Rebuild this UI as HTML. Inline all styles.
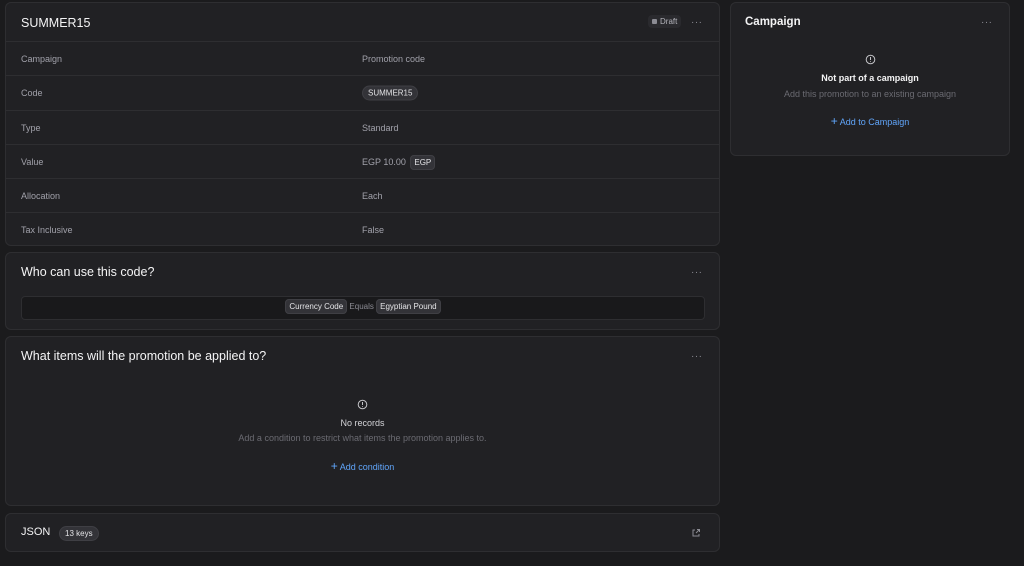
<!DOCTYPE html><html><head><style>
*{box-sizing:border-box;margin:0;padding:0}
body{width:1024px;height:566px;background:#1b1b1d;font-family:"Liberation Sans",sans-serif;color:#ededed;position:relative;overflow:hidden}
.card{position:absolute;background:#212124;border:1px solid #2e2e31;border-radius:6px}
.h{font-size:12.5px;font-weight:500;color:#f4f4f5}
.row{position:absolute;left:0;right:0;border-top:1px solid #2e2e31;font-size:9px;color:#a1a1aa}
.row span{position:absolute;top:50%;transform:translateY(-50%)}
.dots{position:absolute;color:#8b8b93;font-size:10px;letter-spacing:0.5px}
.badge{background:#333338;border:1px solid #3f3f44;border-radius:8px;padding:2px 5px;color:#e4e4e7;font-size:8px}
.tag{background:#333338;border:1px solid #3f3f44;border-radius:4px;padding:2px 3px;color:#e4e4e7;font-size:8px}
.blue{color:#60a5fa;font-size:9px}
.c{position:absolute;left:0;right:0;text-align:center}
</style></head><body>
<div class="card" style="left:5px;top:2px;width:715px;height:244px">
<div class="h" style="position:absolute;left:15px;top:13px">SUMMER15</div>
<div style="position:absolute;left:642px;top:12px;background:#2a2a2e;border-radius:4px;padding:2px 4px;font-size:8px;color:#b4b4bb"><span style="display:inline-block;width:5px;height:5px;background:#8b8b93;border-radius:1px;margin-right:3px"></span>Draft</div>
<div class="dots" style="left:685px;top:14px">···</div>
<div class="row" style="top:38px;height:34px"><span style="left:15px">Campaign</span><span style="left:356px">Promotion code</span></div>
<div class="row" style="top:72px;height:35px"><span style="left:15px">Code</span><span style="left:356px" class="badge">SUMMER15</span></div>
<div class="row" style="top:107px;height:34px"><span style="left:15px">Type</span><span style="left:356px">Standard</span></div>
<div class="row" style="top:141px;height:34px"><span style="left:15px">Value</span><span style="left:356px">EGP 10.00 <b class="tag" style="font-weight:normal;margin-left:2px">EGP</b></span></div>
<div class="row" style="top:175px;height:34px"><span style="left:15px">Allocation</span><span style="left:356px">Each</span></div>
<div class="row" style="top:209px;height:34px"><span style="left:15px">Tax Inclusive</span><span style="left:356px">False</span></div>
</div>
<div class="card" style="left:5px;top:252px;width:715px;height:78px">
<div class="h" style="position:absolute;left:15px;top:12px">Who can use this code?</div>
<div class="dots" style="left:685px;top:14px">···</div>
<div style="position:absolute;left:15px;top:43px;width:684px;height:24px;background:#19191b;border:1px solid #2e2e31;border-radius:4px;text-align:center;font-size:8px;color:#8b8b93;padding-top:5px"><span class="tag">Currency Code</span> Equals <span class="tag">Egyptian Pound</span></div>
</div>
<div class="card" style="left:5px;top:336px;width:715px;height:170px">
<div class="h" style="position:absolute;left:15px;top:12px">What items will the promotion be applied to?</div>
<div class="dots" style="left:685px;top:14px">···</div>
<svg style="position:absolute;left:351px;top:62px" width="11" height="11" viewBox="0 0 11 11"><circle cx="5.5" cy="5.5" r="4.3" fill="none" stroke="#c4c4c8" stroke-width="1"/><path d="M5.5 3v3" stroke="#c4c4c8" stroke-width="1"/><circle cx="5.5" cy="7.6" r="0.5" fill="#c4c4c8"/></svg>
<div class="c" style="top:81px;font-size:9px;color:#d4d4d8">No records</div>
<div class="c" style="top:96px;font-size:9px;color:#6b6b72">Add a condition to restrict what items the promotion applies to.</div>
<div class="c blue" style="top:122px"><span style="font-size:12px">+</span> Add condition</div>
</div>
<div class="card" style="left:5px;top:513px;width:715px;height:39px">
<div class="h" style="position:absolute;left:15px;top:12px;font-size:11px">JSON</div>
<div class="badge" style="position:absolute;left:53px;top:12px">13 keys</div>
<svg style="position:absolute;left:685px;top:14px" width="10" height="10" viewBox="0 0 10 10" fill="none" stroke="#8b8b93" stroke-width="1"><path d="M4 2H2v6h6V6M6 1.5h2.5V4M8.5 1.5L5 5"/></svg>
</div>
<div class="card" style="left:730px;top:2px;width:280px;height:154px">
<div class="h" style="position:absolute;left:14px;top:13px;font-size:11.5px;font-weight:bold">Campaign</div>
<div class="dots" style="left:250px;top:14px">···</div>
<svg style="position:absolute;left:134px;top:51px" width="11" height="11" viewBox="0 0 11 11"><circle cx="5.5" cy="5.5" r="4.3" fill="none" stroke="#c4c4c8" stroke-width="1"/><path d="M5.5 3v3" stroke="#c4c4c8" stroke-width="1"/><circle cx="5.5" cy="7.6" r="0.5" fill="#c4c4c8"/></svg>
<div class="c" style="top:70px;font-size:9px;color:#f4f4f5;font-weight:bold">Not part of a campaign</div>
<div class="c" style="top:86px;font-size:9px;color:#6b6b72">Add this promotion to an existing campaign</div>
<div class="c blue" style="top:111px"><span style="font-size:12px">+</span> Add to Campaign</div>
</div>
</body></html>
